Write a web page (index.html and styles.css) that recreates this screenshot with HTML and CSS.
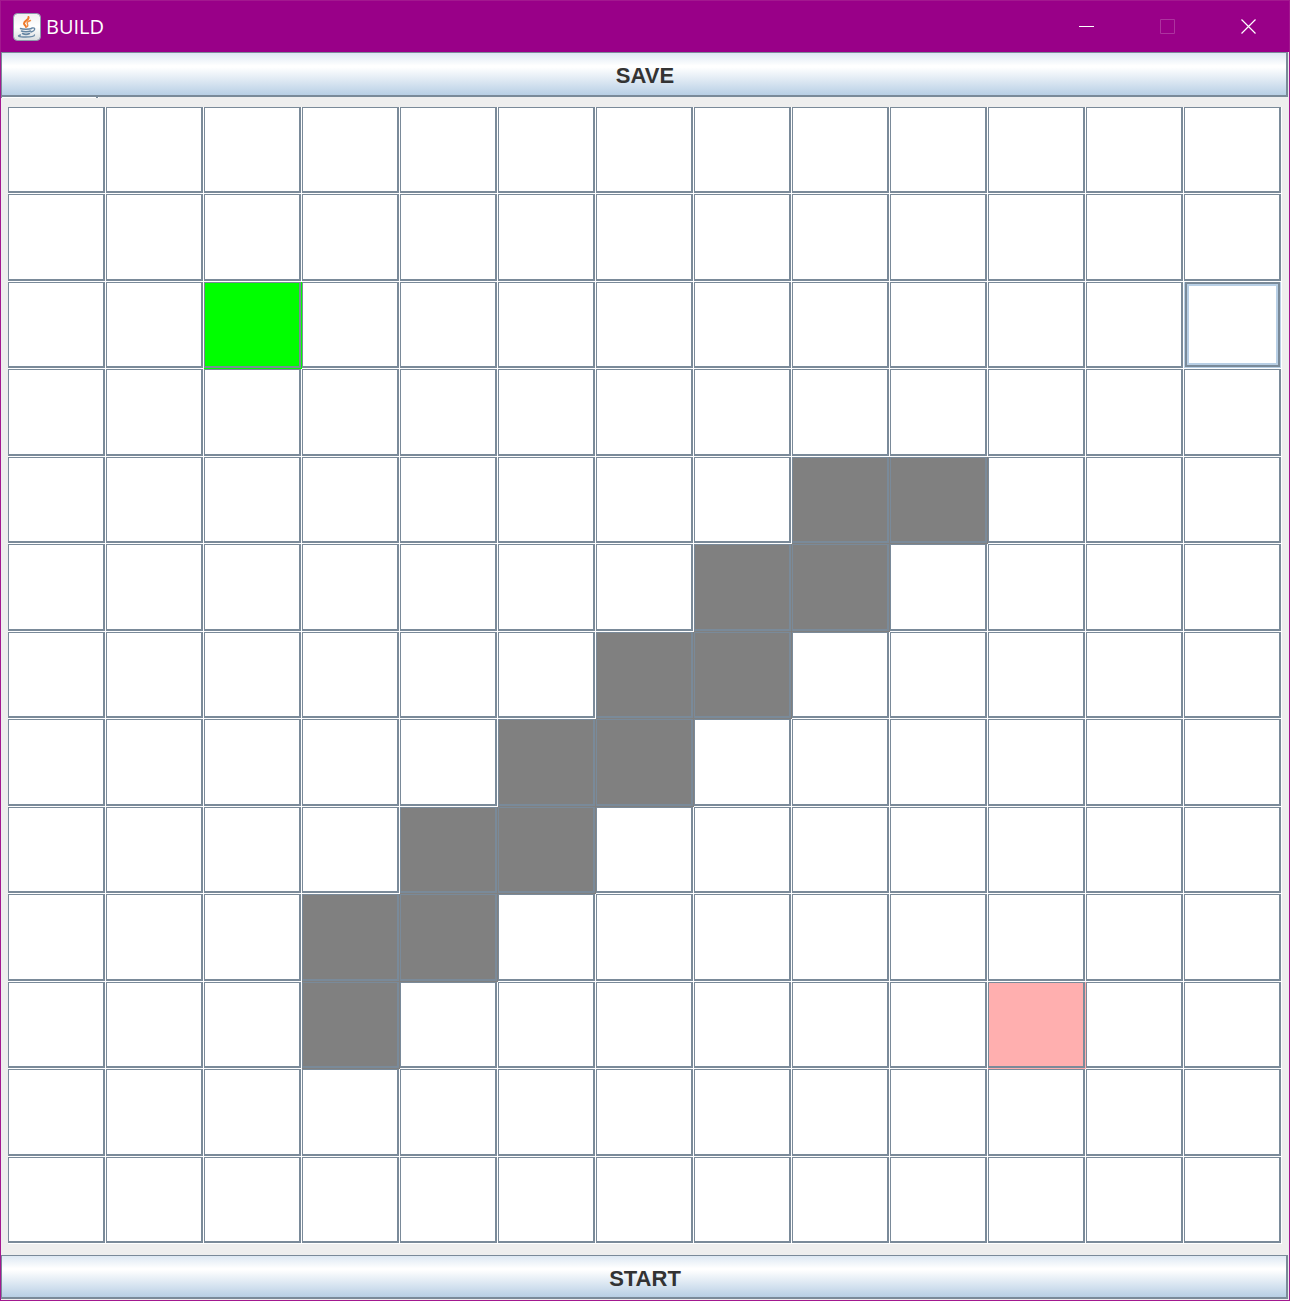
FILE: index.html
```html
<!DOCTYPE html>
<html lang="en">
<head>
<meta charset="utf-8">
<title>BUILD</title>
<link rel="stylesheet" href="styles.css">
</head>
<body>
<div class="window">
  <header class="titlebar">
    <svg class="app-icon" viewBox="0 0 28 28" aria-hidden="true">
      <defs>
        <linearGradient id="tile" x1="0" y1="0" x2="0" y2="1">
          <stop offset="0" stop-color="#f0f0f0"/>
          <stop offset=".5" stop-color="#fff"/>
          <stop offset="1" stop-color="#d9dde0"/>
        </linearGradient>
      </defs>
      <rect x=".5" y=".5" width="27" height="27" rx="4" fill="url(#tile)" stroke="#8c9aaa"/>
      <g fill="none" stroke-linecap="round">
        <path d="M15.500 4c1 3-4.500 3.500-4.500 6.500 0 1.500 2 2 2 3.500" stroke="#ee7a2c" stroke-width="2"/>
        <path d="M17.500 7.500c-3 1-4 2-3 3.500 .6 1 .5 1.500 0 2.500" stroke="#ee8a45" stroke-width="1.400"/>
        <path d="M7.500 15.500c2 1 9 1 11 0M8.500 18c2 1 7 1 9 0M9.500 20.500c2 1 5 1 7 0" stroke="#6585a3" stroke-width="1.500"/>
        <path d="M19 15c4-1 3.500 3-1 4" stroke="#6585a3" stroke-width="1.300"/>
        <path d="M7.500 22c-4 1-2 2 5 2 5 0 9-.5 9-2" stroke="#6b89a6" stroke-width="1.300"/>
      </g>
    </svg>
    <h1 class="title">BUILD</h1>
    <div class="controls">
      <button class="control" type="button" aria-label="Minimize"><svg viewBox="0 0 15 15"><path d="M0 7.500h15"/></svg></button>
      <button class="control" type="button" aria-label="Maximize" disabled><svg viewBox="0 0 15 15"><path d="M.5.500h14v14H.5z"/></svg></button>
      <button class="control" type="button" aria-label="Close"><svg viewBox="0 0 15 15"><path stroke-width="1.200" d="M.5.500l14 14M14.500.500l-14 14"/></svg></button>
    </div>
  </header>
  <button class="action" type="button">SAVE</button>
  <main class="panel">
    <div class="board" id="board"></div>
  </main>
  <button class="action" type="button">START</button>
</div>
<script src="board.js"></script>
</body>
</html>
```
FILE: styles.css
```css
:root {
  --line: #7a8a99;
  --frame: #990088;
  --glow: #b8cfe5;
}

* {
  box-sizing: border-box;
}

body {
  margin: 0;
  font-family: "Liberation Sans", Arial, sans-serif;
}

button {
  margin: 0;
  padding: 0;
  border: 0;
  border-radius: 0;
  outline: 0;
}

.window {
  display: flex;
  flex-direction: column;
  min-height: 100vh;
  border: 1px solid #a3188f;
  background: #eee;
}

.titlebar {
  display: flex;
  align-items: center;
  height: 51px;
  padding-left: 12px;
  background: var(--frame);
  color: #fff;
}

.app-icon {
  width: 28px;
  height: 28px;
}

.title {
  margin: 0 0 0 5px;
  font: 400 20px/28px "Open Sans", "Noto Sans", sans-serif;
}

.controls {
  display: flex;
  margin-left: auto;
}

.control {
  display: grid;
  place-items: center;
  width: 81px;
  height: 50px;
  background: none;
}

.control svg {
  width: 15px;
  height: 15px;
  fill: none;
  stroke: #fff;
}

.control:disabled svg {
  stroke: #ad339f;
}

.action {
  height: 45px;
  padding: 4px 0 0 2px;
  border: solid var(--line);
  border-width: 1px 2px 2px 1px;
  margin-right: 1px;
  background: linear-gradient(#dde8f3, #fff 30%, #fff 34%, var(--glow));
  color: #333;
  font: 700 22px/24px "Liberation Sans", Arial, sans-serif;
}

.action:last-child {
  height: 44px;
  margin-bottom: 1px;
}

.panel {
  display: flex;
  flex: 1;
  padding: 10px 7px 11px;
  background: linear-gradient(90deg, var(--line) 1px, #fff 1px 95px, var(--line) 95px 97px, #fff 97px) 0 0 / 98px 1px no-repeat;
}

.board {
  display: grid;
  flex: 1;
  grid-template-columns: repeat(13, 1fr);
  grid-template-rows: repeat(13, 1fr);
}

.cell {
  --fill: #fff;
  background: var(--fill);
  box-shadow:
    inset -1px -1px var(--fill),
    inset -3px -3px var(--line),
    inset 1px 1px var(--line);
}

.wall {
  --fill: #808080;
}

.start {
  --fill: #00ff00;
}

.goal {
  --fill: #ffafaf;
}

.focused {
  box-shadow:
    inset -1px -1px #fff,
    inset 1px 0 var(--glow),
    inset -2px -2px var(--glow),
    inset 3px 2px var(--line),
    inset -4px -4px var(--line),
    inset 5px 4px var(--glow),
    inset -6px -6px var(--glow);
}
```
FILE: board.js
```js
// One string per row: S start, G goal, # wall, F focused, . empty
const rows = [
  ".............",
  ".............",
  "..S.........F",
  ".............",
  "........##...",
  ".......##....",
  "......##.....",
  ".....##......",
  "....##.......",
  "...##........",
  "...#......G..",
  ".............",
  "............."
];
const kinds = { S: "start", G: "goal", "#": "wall", F: "focused" };
const board = document.getElementById("board");

rows.forEach((row, y) => {
  [...row].forEach((mark, x) => {
    const cell = document.createElement("button");
    cell.type = "button";
    cell.className = "cell";
    if (kinds[mark]) cell.classList.add(kinds[mark]);
    cell.setAttribute("aria-label", `Row ${y + 1}, column ${x + 1}`);
    board.append(cell);
  });
});
```
